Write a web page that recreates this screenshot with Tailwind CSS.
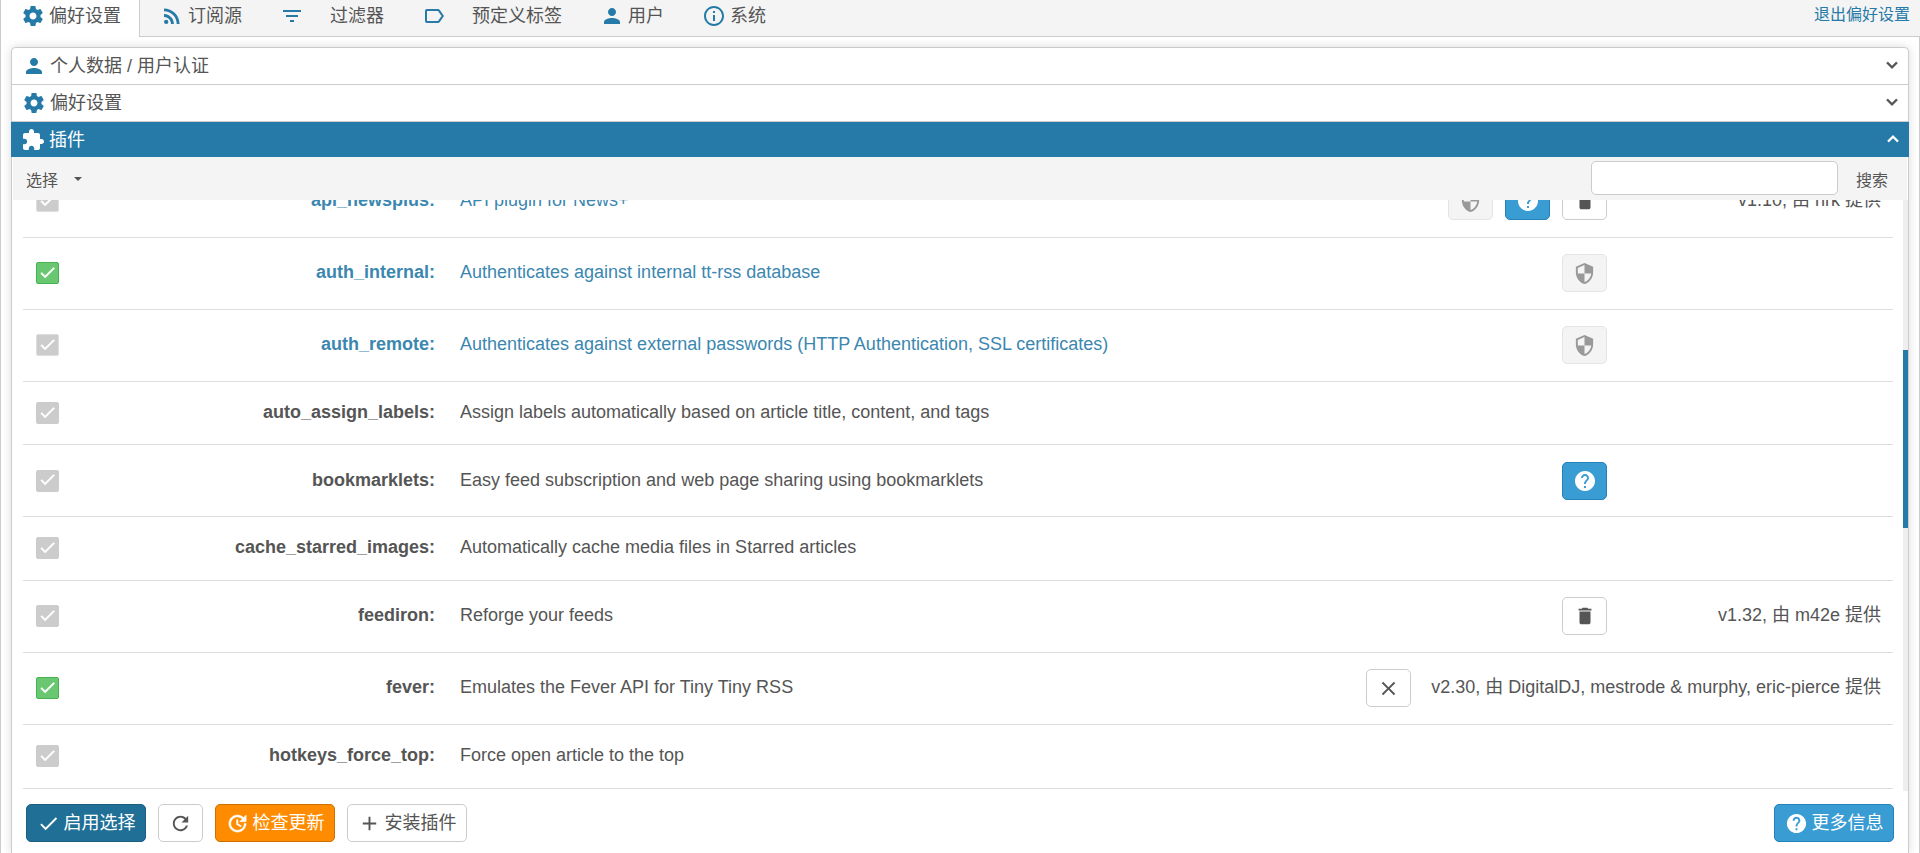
<!DOCTYPE html>
<html lang="zh-CN">
<head>
<meta charset="utf-8">
<meta name="viewport" content="width=device-width, initial-scale=1">
<title>偏好设置</title>
<script src="https://cdn.jsdelivr.net/npm/@tailwindcss/browser@4"></script>
</head>
<body class="flex h-screen flex-col overflow-hidden bg-white font-['Liberation_Sans','Noto_Sans_CJK_SC',sans-serif] text-lg leading-6 text-[#555]">

<svg class="hidden" aria-hidden="true">
  <symbol id="gear" viewBox="0 0 24 24"><path d="M19.43 12.98c.04-.32.07-.64.07-.98s-.03-.66-.07-.98l2.11-1.65c.19-.15.24-.42.12-.64l-2-3.46c-.12-.22-.39-.3-.61-.22l-2.49 1c-.52-.4-1.08-.73-1.69-.98l-.38-2.65C14.46 2.18 14.25 2 14 2h-4c-.25 0-.46.18-.49.42l-.38 2.65c-.61.25-1.17.59-1.69.98l-2.49-1c-.23-.09-.49 0-.61.22l-2 3.46c-.13.22-.07.49.12.64l2.11 1.65c-.04.32-.07.65-.07.98s.03.66.07.98l-2.11 1.65c-.19.15-.24.42-.12.64l2 3.46c.12.22.39.3.61.22l2.49-1c.52.4 1.08.73 1.69.98l.38 2.65c.03.24.24.42.49.42h4c.25 0 .46-.18.49-.42l.38-2.65c.61-.25 1.17-.59 1.69-.98l2.49 1c.23.09.49 0 .61-.22l2-3.46c.12-.22.07-.49-.12-.64l-2.11-1.65zM12 15.5c-1.93 0-3.5-1.57-3.5-3.5s1.57-3.5 3.5-3.5 3.5 1.57 3.5 3.5-1.57 3.5-3.5 3.5z"/></symbol>
  <symbol id="rss" viewBox="0 0 24 24"><circle cx="6.18" cy="17.82" r="2.18"/><path d="M4 4.44v2.83c7.03 0 12.73 5.7 12.73 12.73h2.83c0-8.59-6.97-15.56-15.56-15.56zm0 5.66v2.83c3.9 0 7.07 3.17 7.07 7.07h2.83c0-5.47-4.43-9.9-9.9-9.9z"/></symbol>
  <symbol id="filter" viewBox="0 0 24 24"><path d="M10 18h4v-2h-4v2zM3 6v2h18V6H3zm3 7h12v-2H6v2z"/></symbol>
  <symbol id="tag" viewBox="0 0 24 24"><path d="M17.63 5.84C17.27 5.33 16.67 5 16 5L5 5.01C3.9 5.01 3 5.9 3 7v10c0 1.1.9 1.99 2 1.99L16 19c.67 0 1.27-.33 1.63-.84L22 12l-4.37-6.16zM16 17H5V7h11l3.55 5L16 17z"/></symbol>
  <symbol id="person" viewBox="0 0 24 24"><path d="M12 12c2.21 0 4-1.79 4-4s-1.79-4-4-4-4 1.79-4 4 1.79 4 4 4zm0 2c-2.67 0-8 1.34-8 4v2h16v-2c0-2.66-5.33-4-8-4z"/></symbol>
  <symbol id="info" viewBox="0 0 24 24"><path d="M11 17h2v-6h-2v6zm1-15C6.48 2 2 6.48 2 12s4.48 10 10 10 10-4.48 10-10S17.52 2 12 2zm0 18c-4.41 0-8-3.59-8-8s3.59-8 8-8 8 3.59 8 8-3.59 8-8 8zM11 9h2V7h-2v2z"/></symbol>
  <symbol id="puzzle" viewBox="0 0 24 24"><path d="M20.5 11H19V7c0-1.1-.9-2-2-2h-4V3.500C13 2.120 11.880 1 10.500 1S8 2.120 8 3.500V5H4c-1.100 0-1.990.900-1.990 2v3.800H3.500c1.490 0 2.700 1.210 2.700 2.700s-1.210 2.700-2.700 2.700H2V20c0 1.100.900 2 2 2h3.800v-1.500c0-1.490 1.210-2.700 2.700-2.700 1.490 0 2.700 1.210 2.700 2.700V22H17c1.100 0 2-.900 2-2v-4h1.500c1.380 0 2.500-1.120 2.500-2.500S21.880 11 20.500 11z"/></symbol>
  <symbol id="check" viewBox="0 0 24 24"><path d="M9 16.170L4.830 12l-1.420 1.410L9 19 21 7l-1.410-1.410z"/></symbol>
  <symbol id="help" viewBox="0 0 24 24"><path d="M12 2C6.480 2 2 6.480 2 12s4.480 10 10 10 10-4.480 10-10S17.520 2 12 2zm1 17h-2v-2h2v2zm2.070-7.750l-.900.920C13.450 12.900 13 13.500 13 15h-2v-.500c0-1.100.450-2.100 1.170-2.830l1.240-1.260c.370-.360.590-.860.590-1.410 0-1.100-.900-2-2-2s-2 .900-2 2H8c0-2.210 1.790-4 4-4s4 1.790 4 4c0 .880-.360 1.680-.930 2.250z"/></symbol>
  <symbol id="shield" viewBox="0 0 24 24"><path d="M12 1L3 5v6c0 5.550 3.840 10.740 9 12 5.160-1.260 9-6.450 9-12V5l-9-4zm0 10.990h7c-.530 4.120-3.280 7.790-7 8.940V12H5V6.300l7-3.110v8.800z"/></symbol>
  <symbol id="trash" viewBox="0 0 24 24"><path d="M6 19c0 1.100.900 2 2 2h8c1.100 0 2-.900 2-2V7H6v12zM19 4h-3.500l-1-1h-5l-1 1H5v2h14V4z"/></symbol>
  <symbol id="close" viewBox="0 0 24 24"><path d="M19 6.410L17.590 5 12 10.590 6.410 5 5 6.410 10.590 12 5 17.590 6.410 19 12 13.410 17.590 19 19 17.590 13.410 12z"/></symbol>
  <symbol id="refresh" viewBox="0 0 24 24"><path d="M17.650 6.350C16.200 4.900 14.210 4 12 4c-4.420 0-7.990 3.580-7.990 8s3.570 8 7.990 8c3.730 0 6.840-2.550 7.730-6h-2.080c-.820 2.330-3.040 4-5.650 4-3.310 0-6-2.690-6-6s2.690-6 6-6c1.660 0 3.140.690 4.220 1.780L13 11h7V4l-2.350 2.350z"/></symbol>
  <symbol id="update" viewBox="0 0 24 24"><path d="M21 10.120h-6.780l2.740-2.820c-2.730-2.700-7.150-2.800-9.880-.100-2.730 2.710-2.730 7.080 0 9.790 2.730 2.710 7.150 2.710 9.880 0C18.320 15.650 19 14.080 19 12.100h2c0 1.980-.880 4.550-2.640 6.290-3.510 3.480-9.210 3.480-12.720 0-3.500-3.470-3.530-9.110-.020-12.580 3.510-3.470 9.140-3.470 12.650 0L21 3v7.120zM12.500 8v4.250l3.500 2.080-.720 1.210L11 13V8h1.500z"/></symbol>
  <symbol id="plus" viewBox="0 0 24 24"><path d="M19 13h-6v6h-2v-6H5v-2h6V5h2v6h6v2z"/></symbol>
  <symbol id="chevron" viewBox="0 0 24 24"><path d="M16.590 8.590L12 13.170 7.410 8.590 6 10l6 6 6-6z"/></symbol>
</svg>

<header class="flex h-[37px] shrink-0 items-start border-b border-l border-[#ccc] bg-[#f4f4f4]">
  <nav class="flex">
    <button class="flex h-[37px] items-center gap-1 border-r border-[#ccc] bg-white pr-[18px] pb-[5px] pl-5"><svg class="size-6 fill-[#257aa7]"><use href="#gear"/></svg>偏好设置</button>
    <button class="flex h-8 items-center gap-1 px-5"><svg class="size-6 fill-[#257aa7]"><use href="#rss"/></svg>订阅源</button>
    <button class="flex h-8 items-center gap-[26px] px-[18px]"><svg class="size-6 fill-[#257aa7]"><use href="#filter"/></svg>过滤器</button>
    <button class="flex h-8 items-center gap-[26px] pr-[18px] pl-5"><svg class="size-6 fill-[#257aa7]"><use href="#tag"/></svg>预定义标签</button>
    <button class="flex h-8 items-center gap-1 px-5"><svg class="size-6 fill-[#257aa7]"><use href="#person"/></svg>用户</button>
    <button class="flex h-8 items-center gap-1 px-[18px]"><svg class="size-6 fill-[#257aa7]"><use href="#info"/></svg>系统</button>
  </nav>
  <a href="#" class="ml-auto pt-[3px] pr-[10px] text-base leading-6 text-[#257aa7]">退出偏好设置</a>
</header>

<main class="flex min-h-0 flex-1 flex-col border-x border-[#ccc] px-[10px] pt-[10px]">
  <div class="flex min-h-0 flex-1 flex-col rounded-t-[5px] border-x border-t border-[#ccc] bg-white shadow-[0_0_10px_rgba(0,0,0,0.15)]">
    <button class="flex h-[37px] shrink-0 items-center gap-1 border-b border-[#ccc] pr-[5px] pl-[10px] text-left"><svg class="size-6 fill-[#257aa7]"><use href="#person"/></svg>个人数据 / 用户认证<svg class="mb-0.5 ml-auto size-[22px] fill-[#555] stroke-[#555] stroke-[0.5]"><use href="#chevron"/></svg></button>
    <button class="flex h-[37px] shrink-0 items-center gap-1 border-b border-[#ccc] pr-[5px] pl-[10px] text-left"><svg class="size-6 fill-[#257aa7]"><use href="#gear"/></svg>偏好设置<svg class="mb-0.5 ml-auto size-[22px] fill-[#555] stroke-[#555] stroke-[0.5]"><use href="#chevron"/></svg></button>
    <button class="-mx-px flex h-[35px] shrink-0 items-center gap-1 bg-[#257aa7] pr-[5px] pl-[10px] text-left text-white"><svg class="size-6 fill-white"><use href="#puzzle"/></svg>插件<svg class="mb-0.5 ml-auto size-[22px] rotate-180 fill-white stroke-white stroke-[0.5]"><use href="#chevron"/></svg></button>

    <div class="mx-px flex h-[43px] shrink-0 items-center bg-[#f4f4f4] pr-[19px] pl-[13px] text-base">
      <button class="flex items-center gap-4"><span class="pt-1">选择</span><svg class="h-1 w-2 fill-[#555]" viewBox="0 0 8 4"><path d="M0 0h8L4 4z"/></svg></button>
      <input type="text" aria-label="搜索" class="mb-0.5 ml-auto h-[34px] w-[247px] rounded-[5px] border border-[#ccc] bg-white px-2 outline-none">
      <button class="pt-1 pl-[18px]">搜索</button>
    </div>

    <div class="flex min-h-0 flex-1">
      <ul class="min-w-0 flex-1 overflow-hidden pr-[10px] pl-[11px]">
        <li class="-mt-[34px] flex h-[72px] items-center border-b border-[#ddd] pr-3 pb-px pl-[13px]">
          <span class="grid shrink-0 place-items-center"><input id="p1" type="checkbox" class="col-start-1 row-start-1 h-[22px] w-[23px] appearance-none rounded-[2px] border border-[#ddd] bg-[#ccc]"><svg class="pointer-events-none col-start-1 row-start-1 mb-0.5 size-[19px] fill-white stroke-white stroke-[0.7]"><use href="#check"/></svg></span>
          <label for="p1" class="w-[376px] shrink-0 pb-0.5 text-right font-bold text-[#3b87b0]">api_newsplus:</label>
          <span class="min-w-0 flex-1 truncate pb-0.5 pl-[25px] text-[#3b87b0]">API plugin for News+</span>
          <span class="flex gap-3">
            <button disabled aria-label="系统插件" class="grid h-[38px] w-[45px] place-items-center rounded-[5px] border border-[#e4e4e4] bg-[#f4f4f4]"><svg class="size-[23px] fill-[#999]"><use href="#shield"/></svg></button>
            <button aria-label="帮助" class="grid h-[38px] w-[45px] place-items-center rounded-[5px] border border-[#2582b8] bg-[#399cd3]"><svg class="size-6 fill-white"><use href="#help"/></svg></button>
            <button aria-label="删除" class="grid h-[38px] w-[45px] place-items-center rounded-[5px] border border-[#ccc] bg-white"><svg class="size-[22px] fill-[#555]"><use href="#trash"/></svg></button>
          </span>
          <span class="ml-6 min-w-[250px] pb-0.5 text-right">v1.10, 由 hrk 提供</span>
        </li>
        <li class="flex h-[72px] items-center border-b border-[#ddd] pr-3 pb-px pl-[13px]">
          <span class="grid shrink-0 place-items-center"><input id="p2" type="checkbox" checked class="col-start-1 row-start-1 h-[22px] w-[23px] appearance-none rounded-[2px] border border-[#46b350] bg-[#69c671]"><svg class="pointer-events-none col-start-1 row-start-1 mb-0.5 size-[19px] fill-white stroke-white stroke-[0.7]"><use href="#check"/></svg></span>
          <label for="p2" class="w-[376px] shrink-0 pb-0.5 text-right font-bold text-[#3b87b0]">auth_internal:</label>
          <span class="min-w-0 flex-1 truncate pb-0.5 pl-[25px] text-[#3b87b0]">Authenticates against internal tt-rss database</span>
          <button disabled aria-label="系统插件" class="grid h-[38px] w-[45px] place-items-center rounded-[5px] border border-[#e4e4e4] bg-[#f4f4f4]"><svg class="size-[23px] fill-[#999]"><use href="#shield"/></svg></button>
          <span class="ml-6 min-w-[250px]"></span>
        </li>
        <li class="flex h-[72px] items-center border-b border-[#ddd] pr-3 pb-px pl-[13px]">
          <span class="grid shrink-0 place-items-center"><input id="p3" type="checkbox" class="col-start-1 row-start-1 h-[22px] w-[23px] appearance-none rounded-[2px] border border-[#ddd] bg-[#ccc]"><svg class="pointer-events-none col-start-1 row-start-1 mb-0.5 size-[19px] fill-white stroke-white stroke-[0.7]"><use href="#check"/></svg></span>
          <label for="p3" class="w-[376px] shrink-0 pb-0.5 text-right font-bold text-[#3b87b0]">auth_remote:</label>
          <span class="min-w-0 flex-1 truncate pb-0.5 pl-[25px] text-[#3b87b0]">Authenticates against external passwords (HTTP Authentication, SSL certificates)</span>
          <button disabled aria-label="系统插件" class="grid h-[38px] w-[45px] place-items-center rounded-[5px] border border-[#e4e4e4] bg-[#f4f4f4]"><svg class="size-[23px] fill-[#999]"><use href="#shield"/></svg></button>
          <span class="ml-6 min-w-[250px]"></span>
        </li>
        <li class="flex h-[63px] items-center border-b border-[#ddd] pr-3 pl-[13px]">
          <span class="grid shrink-0 place-items-center"><input id="p4" type="checkbox" class="col-start-1 row-start-1 h-[22px] w-[23px] appearance-none rounded-[2px] border border-[#ccc] bg-[#ccc]"><svg class="pointer-events-none col-start-1 row-start-1 mb-0.5 size-[19px] fill-white stroke-white stroke-[0.7]"><use href="#check"/></svg></span>
          <label for="p4" class="w-[376px] shrink-0 pb-0.5 text-right font-bold">auto_assign_labels:</label>
          <span class="min-w-0 flex-1 truncate pb-0.5 pl-[25px]">Assign labels automatically based on article title, content, and tags</span>
        </li>
        <li class="flex h-[72px] items-center border-b border-[#ddd] pr-3 pl-[13px]">
          <span class="grid shrink-0 place-items-center"><input id="p5" type="checkbox" class="col-start-1 row-start-1 h-[22px] w-[23px] appearance-none rounded-[2px] border border-[#ccc] bg-[#ccc]"><svg class="pointer-events-none col-start-1 row-start-1 mb-0.5 size-[19px] fill-white stroke-white stroke-[0.7]"><use href="#check"/></svg></span>
          <label for="p5" class="w-[376px] shrink-0 pb-0.5 text-right font-bold">bookmarklets:</label>
          <span class="min-w-0 flex-1 truncate pb-0.5 pl-[25px]">Easy feed subscription and web page sharing using bookmarklets</span>
          <button aria-label="帮助" class="grid h-[38px] w-[45px] place-items-center rounded-[5px] border border-[#2582b8] bg-[#399cd3]"><svg class="size-6 fill-white"><use href="#help"/></svg></button>
          <span class="ml-6 min-w-[250px]"></span>
        </li>
        <li class="flex h-16 items-center border-b border-[#ddd] pr-3 pb-px pl-[13px]">
          <span class="grid shrink-0 place-items-center"><input id="p6" type="checkbox" class="col-start-1 row-start-1 h-[22px] w-[23px] appearance-none rounded-[2px] border border-[#ccc] bg-[#ccc]"><svg class="pointer-events-none col-start-1 row-start-1 mb-0.5 size-[19px] fill-white stroke-white stroke-[0.7]"><use href="#check"/></svg></span>
          <label for="p6" class="w-[376px] shrink-0 pb-0.5 text-right font-bold">cache_starred_images:</label>
          <span class="min-w-0 flex-1 truncate pb-0.5 pl-[25px]">Automatically cache media files in Starred articles</span>
        </li>
        <li class="flex h-[72px] items-center border-b border-[#ddd] pr-3 pb-px pl-[13px]">
          <span class="grid shrink-0 place-items-center"><input id="p7" type="checkbox" class="col-start-1 row-start-1 h-[22px] w-[23px] appearance-none rounded-[2px] border border-[#ccc] bg-[#ccc]"><svg class="pointer-events-none col-start-1 row-start-1 mb-0.5 size-[19px] fill-white stroke-white stroke-[0.7]"><use href="#check"/></svg></span>
          <label for="p7" class="w-[376px] shrink-0 pb-0.5 text-right font-bold">feediron:</label>
          <span class="min-w-0 flex-1 truncate pb-0.5 pl-[25px]">Reforge your feeds</span>
          <button aria-label="删除" class="grid h-[38px] w-[45px] place-items-center rounded-[5px] border border-[#ccc] bg-white"><svg class="size-[22px] fill-[#555]"><use href="#trash"/></svg></button>
          <span class="ml-6 min-w-[250px] pb-0.5 text-right">v1.32, 由 m42e 提供</span>
        </li>
        <li class="flex h-[72px] items-center border-b border-[#ddd] pr-3 pb-px pl-[13px]">
          <span class="grid shrink-0 place-items-center"><input id="p8" type="checkbox" checked class="col-start-1 row-start-1 h-[22px] w-[23px] appearance-none rounded-[2px] border border-[#46b350] bg-[#69c671]"><svg class="pointer-events-none col-start-1 row-start-1 mb-0.5 size-[19px] fill-white stroke-white stroke-[0.7]"><use href="#check"/></svg></span>
          <label for="p8" class="w-[376px] shrink-0 pb-0.5 text-right font-bold">fever:</label>
          <span class="min-w-0 flex-1 truncate pb-0.5 pl-[25px]">Emulates the Fever API for Tiny Tiny RSS</span>
          <button aria-label="清除数据" class="grid h-[38px] w-[45px] place-items-center rounded-[5px] border border-[#ccc] bg-white"><svg class="size-[23px] fill-[#555]"><use href="#close"/></svg></button>
          <span class="ml-5 min-w-[250px] pb-0.5 text-right">v2.30, 由 DigitalDJ, mestrode &amp; murphy, eric-pierce 提供</span>
        </li>
        <li class="flex h-16 items-center border-b border-[#ddd] pr-3 pb-px pl-[13px]">
          <span class="grid shrink-0 place-items-center"><input id="p9" type="checkbox" class="col-start-1 row-start-1 h-[22px] w-[23px] appearance-none rounded-[2px] border border-[#ccc] bg-[#ccc]"><svg class="pointer-events-none col-start-1 row-start-1 mb-0.5 size-[19px] fill-white stroke-white stroke-[0.7]"><use href="#check"/></svg></span>
          <label for="p9" class="w-[376px] shrink-0 pb-0.5 text-right font-bold">hotkeys_force_top:</label>
          <span class="min-w-0 flex-1 truncate pb-0.5 pl-[25px]">Force open article to the top</span>
        </li>
      </ul>
      <div class="flex w-[5px] flex-col bg-[#eee]" aria-hidden="true">
        <div class="grow-[150]"></div>
        <div class="grow-[177] bg-[#257aa7]"></div>
        <div class="grow-[263]"></div>
      </div>
    </div>

    <div class="flex shrink-0 items-center gap-3 pt-[13px] pr-[14px] pb-[11px] pl-[14px]">
      <button class="flex h-[38px] w-[120px] items-center justify-center rounded-[5px] border border-[#1c5d80] bg-[#206f97] text-white"><svg class="mr-1 size-[23px] fill-white"><use href="#check"/></svg>启用选择</button>
      <button aria-label="刷新" class="grid h-[38px] w-[45px] place-items-center rounded-[5px] border border-[#ccc] bg-white"><svg class="size-[23px] fill-[#555]"><use href="#refresh"/></svg></button>
      <button class="flex h-[38px] w-[120px] items-center justify-center rounded-[5px] border border-[#cc7000] bg-[#ff8c00] text-white"><svg class="mr-1 size-[23px] fill-white stroke-white stroke-[0.5]"><use href="#update"/></svg>检查更新</button>
      <button class="flex h-[38px] w-[120px] items-center justify-center rounded-[5px] border border-[#ccc] bg-white"><svg class="mr-1 size-[23px] fill-[#555]"><use href="#plus"/></svg>安装插件</button>
      <button class="ml-auto flex h-[38px] w-[120px] items-center justify-center rounded-[5px] border border-[#2582b8] bg-[#399cd3] text-white"><svg class="mr-1 size-[23px] fill-white"><use href="#help"/></svg>更多信息</button>
    </div>
  </div>
</main>
</body>
</html>
